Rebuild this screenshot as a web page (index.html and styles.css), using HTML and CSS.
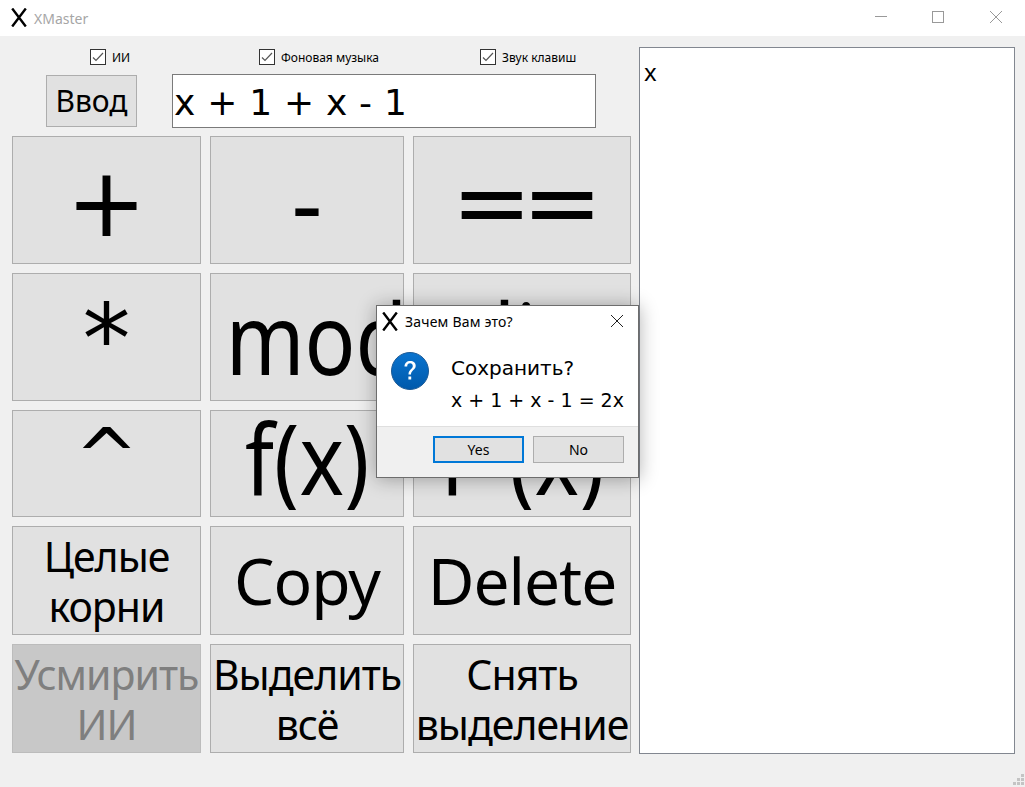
FILE: index.html
```html
<!DOCTYPE html>
<html lang="ru">
<head>
<meta charset="utf-8">
<title>XMaster</title>
<link rel="stylesheet" href="styles.css">
</head>
<body>
<div class="window">
  <header class="titlebar">
    <svg class="app-x" width="16" height="19" viewBox="0 0 16 19"><path d="M1.200 .5L14.800 18.500M14.800 .5L1.200 18.500" stroke="#000" stroke-width="2.400" fill="none"/></svg>
    <div class="app-title">XMaster</div>
    <div class="controls">
      <svg class="ctl" width="58" height="36" viewBox="0 0 58 36"><path d="M24 16.500h12" stroke="#999" fill="none"/></svg>
      <svg class="ctl" width="58" height="36" viewBox="0 0 58 36"><rect x="23.500" y="11.500" width="11" height="11" stroke="#999" fill="none"/></svg>
      <svg class="ctl" width="58" height="36" viewBox="0 0 58 36"><path d="M23 11l12 12M35 11L23 23" stroke="#999" fill="none"/></svg>
    </div>
  </header>
  <main class="content">
    <section class="left">
      <div class="checks">
        <label class="check c1"><svg class="box" width="16" height="16" viewBox="0 0 16 16"><rect x=".5" y=".5" width="15" height="15" fill="#fff" stroke="#333"/><path d="M3 8.500l3 3 7-7.500" fill="none" stroke="#555" stroke-width="1.200"/></svg><span>ИИ</span></label>
        <label class="check c2"><svg class="box" width="16" height="16" viewBox="0 0 16 16"><rect x=".5" y=".5" width="15" height="15" fill="#fff" stroke="#333"/><path d="M3 8.500l3 3 7-7.500" fill="none" stroke="#555" stroke-width="1.200"/></svg><span>Фоновая музыка</span></label>
        <label class="check c3"><svg class="box" width="16" height="16" viewBox="0 0 16 16"><rect x=".5" y=".5" width="15" height="15" fill="#fff" stroke="#333"/><path d="M3 8.500l3 3 7-7.500" fill="none" stroke="#555" stroke-width="1.200"/></svg><span>Звук клавиш</span></label>
      </div>
      <div class="inputrow">
        <button class="btn enter">Ввод</button>
        <div class="expr">x + 1 + x - 1</div>
      </div>
      <div class="pad">
        <button class="btn sym">+</button>
        <button class="btn minus">-</button>
        <button class="btn sym eq">==</button>
        <button class="btn star">*</button>
        <button class="btn xl r2"><span class="clip"><span class="sq">mod</span></span></button>
        <button class="btn xl r2"><span class="clip"><span class="sq">div</span></span></button>
        <button class="btn caret">^</button>
        <button class="btn xl r3"><span class="clip"><span class="sq">f(x)</span></span></button>
        <button class="btn xl r3"><span class="clip"><span class="sq">f '(x)</span></span></button>
        <button class="btn m">Целые корни</button>
        <button class="btn l">Copy</button>
        <button class="btn l">Delete</button>
        <button class="btn m off">Усмирить ИИ</button>
        <button class="btn m">Выделить всё</button>
        <button class="btn m">Снять выделение</button>
      </div>
    </section>
    <section class="output">x</section>
  </main>
  <svg class="grip" width="12" height="12" viewBox="0 0 12 12"><path d="M9 0h3v3H9zM5 4h3v3H5zM9 4h3v3H9zM1 8h3v3H1zM5 8h3v3H5zM9 8h3v3H9z" fill="#c4c4c4"/></svg>
</div>
<div class="dialog">
  <div class="dlg-title">
    <svg class="dlg-x" width="16" height="19" viewBox="0 0 16 19"><path d="M1.200 .5L14.800 18.500M14.800 .5L1.200 18.500" stroke="#000" stroke-width="2.400" fill="none"/></svg>
    <span class="dlg-name">Зачем Вам это?</span>
    <svg class="dlg-close" width="14" height="14" viewBox="0 0 14 14"><path d="M1 1l12 12M13 1L1 13" stroke="#222" fill="none"/></svg>
  </div>
  <div class="dlg-body">
    <svg class="dlg-icon" width="38" height="38" viewBox="0 0 38 38"><defs><linearGradient id="q" x1="0" y1="0" x2="0" y2="1"><stop offset="0" stop-color="#0a74cf"/><stop offset="1" stop-color="#0059ab"/></linearGradient></defs><circle cx="19" cy="19" r="18.500" fill="url(#q)" stroke="#1c5a96"/><path d="M13.500 14.500c0-3.500 2.500-5.500 5.700-5.500 3.300 0 5.500 2 5.500 4.800 0 4.200-4.700 4.500-4.700 8.700h-2.500c0-5 4.300-5.300 4.300-8.500 0-1.500-1-2.700-2.700-2.700-1.800 0-2.900 1.200-2.900 3.200z" fill="#fff"/><rect x="17.400" y="24.500" width="2.800" height="3" fill="#fff"/></svg>
    <div class="dlg-text">
      <div class="dlg-l1">Сохранить?</div>
      <div class="dlg-l2">x + 1 + x - 1 = 2x</div>
    </div>
  </div>
  <div class="dlg-foot">
    <button class="dbtn primary">Yes</button>
    <button class="dbtn">No</button>
  </div>
</div>
</body>
</html>
```
FILE: styles.css
```css
* { box-sizing: border-box; }
html, body { margin: 0; padding: 0; }
body { width: 1025px; height: 787px; overflow: hidden; position: relative; font-family: "Noto Sans", "DejaVu Sans", sans-serif; background: #f0f0f0; color: #000; }
.window { width: 1025px; height: 787px; display: flex; flex-direction: column; position: relative; }
.titlebar { height: 36px; background: #fff; display: flex; align-items: center; flex: none; }
.app-x { flex: none; margin-left: 11px; margin-right: 7px; margin-top: -1px; }
.app-title { font-size: 14px; color: #a6a6a6; }
.controls { margin-left: auto; display: flex; align-self: flex-start; }
.ctl { display: block; }
.content { flex: 1; display: flex; padding: 11px 10px 33px 12px; gap: 8px; background: #f0f0f0; }
.left { width: 619px; flex: none; display: flex; flex-direction: column; }
.checks { height: 20px; display: flex; padding-top: 1px; }
.check { display: flex; align-items: center; gap: 6px; font-size: 12px; height: 18px; white-space: nowrap; }
.c1 { margin-left: 78px; width: 169px; }
.c2 { width: 221px; }
.box { flex: none; }
.inputrow { display: flex; height: 54px; margin-top: 7px; padding-left: 34px; }
.btn { background: #e1e1e1; border: 1px solid #adadad; padding: 0; margin: 0; font-family: "Noto Sans", "DejaVu Sans", sans-serif; color: #000; overflow: hidden; display: block; }
.enter { width: 91px; height: 52px; margin-top: 1px; font-size: 30px; line-height: 1; }
.expr { margin-left: 35px; width: 424px; height: 54px; background: #fff; border: 1px solid #7a7a7a; font: 36px/56px "DejaVu Sans", sans-serif; padding-left: 1px; letter-spacing: .2px; }
.pad { display: grid; grid-template-columns: 189px 194px 218px; grid-template-rows: 128px 128px 107px 109px 109px; gap: 9px; margin-top: 8px; }
.sym { font: 96px/1 "DejaVu Sans", sans-serif; padding-top: 6px; white-space: nowrap; }
.eq { letter-spacing: -10px; padding-right: 0; }
.minus { font-size: 96px; line-height: 1; padding-top: 2px; }
.star { font: 96px/1 "DejaVu Sans", sans-serif; padding-top: 6px; }
.caret { font: 76px/1 "DejaVu Sans", sans-serif; padding-bottom: 14px; }
.xl { font-size: 98px; }
.clip { display: block; overflow: hidden; text-align: center; white-space: nowrap; }
.sq { display: inline-block; transform: scaleX(.86); }
.r2 .clip { height: 126px; line-height: 126px; }
.r3 .clip { height: 99px; line-height: 92px; }
.xl.r2, .xl.r3 { display: flex; flex-direction: column; justify-content: flex-start; }
.l { font-size: 64px; line-height: 1; letter-spacing: -1px; }
.m { font-size: 41px; line-height: 50px; letter-spacing: -1px; }
.off { background: #c8c8c8; color: #7f7f7f; border-color: #bcbcbc; }
.output { width: 376px; flex: none; background: #fff; border: 1px solid #828790; font-size: 24px; line-height: 1; padding: 12px 4px; }
.grip { position: absolute; right: 1px; bottom: 1px; }
.dialog { position: absolute; left: 376px; top: 305px; width: 263px; height: 173px; background: #fff; border: 1px solid #6d6d6d; box-shadow: 0 1px 18px rgba(0,0,0,.32); display: flex; flex-direction: column; }
.dlg-title { height: 30px; display: flex; align-items: center; flex: none; }
.dlg-x { flex: none; margin-left: 5px; margin-right: 7px; }
.dlg-name { font-size: 14px; letter-spacing: .2px; }
.dlg-close { margin-left: auto; margin-right: 14px; }
.dlg-body { flex: 1; display: flex; padding: 14px 0 0 14px; }
.dlg-icon { flex: none; margin-right: 22px; margin-top: 2px; }
.dlg-text { font-family: "DejaVu Sans", sans-serif; white-space: nowrap; margin-top: 2px; line-height: 32px; }
.dlg-l1 { font-size: 20px; }
.dlg-l2 { font-size: 19px; }
.dlg-foot { height: 51px; background: #f0f0f0; border-top: 1px solid #dfdfdf; display: flex; justify-content: flex-end; gap: 9px; padding: 9px 14px 0 0; flex: none; }
.dbtn { width: 91px; height: 27px; background: #e1e1e1; border: 1px solid #adadad; font: 14px/1 "Noto Sans", sans-serif; padding: 0; color: #000; }
.primary { border: 2px solid #0078d7; }
```
